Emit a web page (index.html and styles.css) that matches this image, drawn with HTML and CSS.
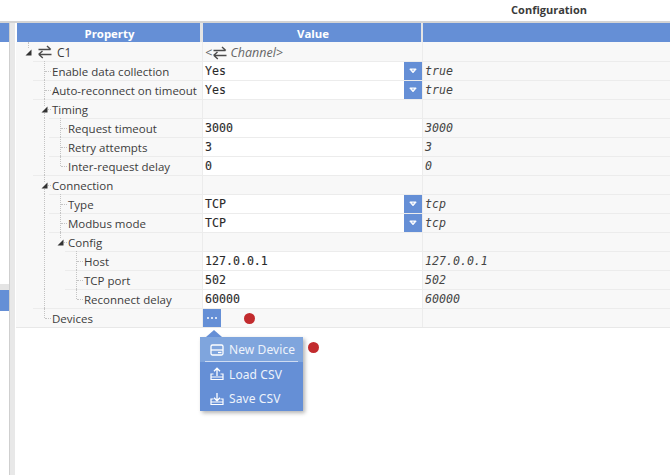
FILE: index.html
```html
<!DOCTYPE html>
<html lang="en">
<head>
<meta charset="utf-8">
<title>Configuration</title>
<link rel="stylesheet" href="styles.css">
</head>
<body>
<svg class="defs" width="0" height="0" aria-hidden="true">
  <symbol id="chan" viewBox="0 0 14 14">
    <path d="M0.5 4.5H12.5M9 1L12.8 4.5M0.5 9.5L4.5 6M1 9.5H13.5M1 9.5L4.8 13" fill="none" stroke="#4a4a4a" stroke-width="1.4"/>
  </symbol>
  <symbol id="caret" viewBox="0 0 8 6">
    <path d="M0.8 1H7.2L4 4.8Z" fill="#fff" stroke="#fff" stroke-width="1"/>
    <path d="M2.9 1.7H5.1L4 2.9Z" fill="#6a93d8"/>
  </symbol>
  <symbol id="tri" viewBox="0 0 7 7">
    <path d="M6.5 0.5V6.5H0.5Z" fill="#333"/>
  </symbol>
</svg>
<header class="topbar"><span class="title">Configuration</span></header>
<main class="main">
  <aside class="side">
    <div class="side-head"></div>
    <div class="side-body"></div>
    <div class="side-band"></div>
    <div class="side-sel"></div>
    <div class="side-rest"></div>
  </aside>
  <div class="splitter"></div>
  <section class="table">
    <div class="head">
      <div class="hcell hname">Property</div>
      <div class="hcell hvalue">Value</div>
      <div class="hcell hextra"></div>
    </div>

    <div class="row first">
      <div class="name l0"><i class="stub"></i><svg class="tri"><use href="#tri"/></svg><svg class="chan"><use href="#chan"/></svg><span class="label">C1</span></div>
      <div class="val group note">&lt;<svg class="chan inl"><use href="#chan"/></svg> Channel&gt;</div>
      <div class="extra"></div>
    </div>
    <div class="row">
      <div class="name l1"><i class="v v1"></i><i class="h h1"></i><span class="label">Enable data collection</span></div>
      <div class="val edit">Yes<span class="drop"><svg class="caret"><use href="#caret"/></svg></span></div>
      <div class="extra">true</div>
    </div>
    <div class="row">
      <div class="name l1"><i class="v v1"></i><i class="h h1"></i><span class="label">Auto-reconnect on timeout</span></div>
      <div class="val edit">Yes<span class="drop"><svg class="caret"><use href="#caret"/></svg></span></div>
      <div class="extra">true</div>
    </div>
    <div class="row">
      <div class="name l1"><i class="v v1"></i><i class="h h1"></i><svg class="tri t1"><use href="#tri"/></svg><span class="label">Timing</span></div>
      <div class="val group"></div>
      <div class="extra"></div>
    </div>
    <div class="row">
      <div class="name l2"><i class="v v1"></i><i class="v v2"></i><i class="h h2"></i><span class="label">Request timeout</span></div>
      <div class="val edit">3000</div>
      <div class="extra">3000</div>
    </div>
    <div class="row">
      <div class="name l2"><i class="v v1"></i><i class="v v2"></i><i class="h h2"></i><span class="label">Retry attempts</span></div>
      <div class="val edit">3</div>
      <div class="extra">3</div>
    </div>
    <div class="row">
      <div class="name l2"><i class="v v1"></i><i class="v v2 end"></i><i class="h h2"></i><span class="label">Inter-request delay</span></div>
      <div class="val edit">0</div>
      <div class="extra">0</div>
    </div>
    <div class="row">
      <div class="name l1"><i class="v v1"></i><i class="h h1"></i><svg class="tri t1"><use href="#tri"/></svg><span class="label">Connection</span></div>
      <div class="val group"></div>
      <div class="extra"></div>
    </div>
    <div class="row">
      <div class="name l2"><i class="v v1"></i><i class="v v2"></i><i class="h h2"></i><span class="label">Type</span></div>
      <div class="val edit">TCP<span class="drop"><svg class="caret"><use href="#caret"/></svg></span></div>
      <div class="extra">tcp</div>
    </div>
    <div class="row">
      <div class="name l2"><i class="v v1"></i><i class="v v2"></i><i class="h h2"></i><span class="label">Modbus mode</span></div>
      <div class="val edit">TCP<span class="drop"><svg class="caret"><use href="#caret"/></svg></span></div>
      <div class="extra">tcp</div>
    </div>
    <div class="row">
      <div class="name l2"><i class="v v1"></i><i class="v v2 end"></i><i class="h h2"></i><svg class="tri t2"><use href="#tri"/></svg><span class="label">Config</span></div>
      <div class="val group"></div>
      <div class="extra"></div>
    </div>
    <div class="row">
      <div class="name l3"><i class="v v1"></i><i class="v v3"></i><i class="h h3"></i><span class="label">Host</span></div>
      <div class="val edit">127.0.0.1</div>
      <div class="extra">127.0.0.1</div>
    </div>
    <div class="row">
      <div class="name l3"><i class="v v1"></i><i class="v v3"></i><i class="h h3"></i><span class="label">TCP port</span></div>
      <div class="val edit">502</div>
      <div class="extra">502</div>
    </div>
    <div class="row">
      <div class="name l3"><i class="v v1"></i><i class="v v3 end"></i><i class="h h3"></i><span class="label">Reconnect delay</span></div>
      <div class="val edit">60000</div>
      <div class="extra">60000</div>
    </div>
    <div class="row last">
      <div class="name l1"><i class="v v1 end"></i><i class="h h1"></i><span class="label">Devices</span></div>
      <div class="val group"><span class="more"><b></b><b></b><b></b></span></div>
      <div class="extra"></div>
    </div>

    <span class="dot dot-a"></span>
    <span class="dot dot-b"></span>

    <nav class="menu">
      <div class="item active">
        <svg class="micon" viewBox="0 0 14 14"><rect x="1" y="2" width="12" height="10" rx="1.5" fill="none" stroke="#fff" stroke-width="1.3"/><path d="M1 7H13" stroke="#fff" stroke-width="1.3"/><path d="M8 9.5H11.5" stroke="#fff" stroke-width="1.3"/></svg>
        <span>New Device</span>
      </div>
      <div class="item">
        <svg class="micon" viewBox="0 0 14 14"><path d="M7 9V1.5M4 4.3L7 1.2L10 4.3" fill="none" stroke="#fff" stroke-width="1.3"/><path d="M3.5 7H1V12.5H13V7H10.5M1 10H13" fill="none" stroke="#fff" stroke-width="1.2"/></svg>
        <span>Load CSV</span>
      </div>
      <div class="item">
        <svg class="micon" viewBox="0 0 14 14"><path d="M7 1V8.5M4 5.7L7 8.8L10 5.7" fill="none" stroke="#fff" stroke-width="1.3"/><path d="M3.5 7H1V12.5H13V7H10.5M1 10H13" fill="none" stroke="#fff" stroke-width="1.2"/></svg>
        <span>Save CSV</span>
      </div>
    </nav>
  </section>
</main>
</body>
</html>
```
FILE: styles.css
```css
* { box-sizing: border-box; }
html, body { margin: 0; height: 100%; overflow: hidden; }
body {
  width: 670px;
  height: 475px;
  display: flex;
  flex-direction: column;
  background: #fff;
  font-family: "Open Sans", "Noto Sans", sans-serif;
  font-size: 11.5px;
  color: #333;
}
.defs { position: absolute; }

.topbar {
  height: 21px;
  flex: none;
  display: flex;
  justify-content: flex-end;
  align-items: center;
  padding-right: 83px;
}
.title { font-weight: 700; font-size: 11px; color: #3a3a3a; position: relative; top: -1px; }

.main { flex: 1; display: flex; min-height: 0; border-top: 2px solid #d4d4d4; }

.side { width: 9px; flex: none; display: flex; flex-direction: column; }
.side-head { height: 19px; background: #658fd6; }
.side-body { flex: 0 0 242px; }
.side-band { height: 6px; background: #e4e4e4; }
.side-sel { height: 21px; background: #658fd6; }

.splitter { width: 6px; flex: none; background: #e8e8e8; border-left: 1px solid #cfcfcf; }

.table { position: relative; flex: 1; margin-left: 1px; min-width: 0; }

.head, .row { display: grid; grid-template-columns: 186px 220px 1fr; }
.head { height: 19px; background: #658fd6; color: #fff; font-weight: 700; }
.hcell {
  display: flex;
  align-items: center;
  justify-content: center;
  padding: 1px 0 0 2px;
  background: #658fd6;
  border-left: 1px solid #e4e4e4;
  font-size: 11.4px;
}
.hname { border-left: 1px solid #fff; border-right: 2px solid #e4e4e4; }
.hvalue { border-right: 1px solid #e4e4e4; }

.row { height: 19px; background: #f8f8f8; }
.last { height: 20px; border-bottom: 1px solid #e8e8e8; }

.name { position: relative; display: flex; align-items: center; }
.name::before {
  content: "";
  position: absolute;
  top: 0;
  right: 0;
  height: 1px;
  background: #ececec;
}
.first .name::before { display: none; }
.l0 { padding-left: 22px; }
.l1 { padding-left: 36px; }
.l2 { padding-left: 52px; }
.l3 { padding-left: 68px; }
.l1::before { left: 17px; }
.l2::before { left: 33px; }
.l3::before { left: 49px; }

.label { white-space: nowrap; color: #3c3c3c; position: relative; top: 0.5px; }
.l0 .label { font-size: 12px; }

.v, .h, .stub { position: absolute; display: block; }
.v { top: 0; bottom: 0; width: 0; border-left: 1px dotted #c4c4c4; }
.v.end { bottom: 9px; }
.v1 { left: 28px; }
.v2 { left: 44px; }
.v3 { left: 60px; }
.h { top: 10px; height: 0; border-top: 1px dotted #c4c4c4; width: 6px; }
.h1 { left: 29px; }
.h2 { left: 45px; }
.h3 { left: 61px; }
.stub { left: 12px; top: 0; height: 6px; border-left: 1px dotted #c4c4c4; }

.tri { position: absolute; width: 7px; height: 7px; top: 7px; left: 9px; }
.t1 { left: 25px; background: #f8f8f8; }
.t2 { left: 41px; background: #f8f8f8; }
.chan { width: 14px; height: 14px; flex: none; margin-right: 5px; }
.chan.inl { margin: 0 0 0 1px; vertical-align: -3px; }

.val, .extra {
  position: relative;
  border-top: 1px solid #ececec;
  border-left: 1px solid #ececec;
  font-family: "DejaVu Sans Mono", monospace;
  font-size: 11.6px;
  line-height: 19px;
  white-space: nowrap;
  overflow: hidden;
}
.first .val, .first .extra { border-top: 0; }
.val { padding-left: 2px; color: #2a2a2a; -webkit-text-stroke: 0.12px #2a2a2a; }
.edit { background: #fff; }
.extra { padding-left: 2px; font-style: italic; color: #444; }
.note {
  font-family: "Open Sans", sans-serif;
  font-size: 12.5px;
  font-style: italic;
  color: #666;
  line-height: 22px;
  -webkit-text-stroke: 0;
}
.drop {
  position: absolute;
  right: 0;
  top: 0;
  width: 18px;
  height: 18px;
  background: #658fd6;
  display: flex;
  align-items: center;
  justify-content: center;
}
.caret { width: 8px; height: 6px; }
.more {
  display: flex;
  width: 18px;
  height: 18px;
  margin-left: -2px;
  gap: 1.5px;
  align-items: center;
  justify-content: center;
  background: #658fd6;
}
.more b { width: 2.5px; height: 2.5px; border-radius: 50%; background: #fff; }

.dot { position: absolute; width: 11px; height: 11px; border-radius: 50%; background: #c22b2e; }
.dot-a { left: 228px; top: 290px; }
.dot-b { left: 292px; top: 319px; }

.menu {
  position: absolute;
  left: 184px;
  top: 314px;
  width: 103px;
  background: #658fd6;
  box-shadow: 2px 2px 4px rgba(0, 0, 0, 0.3);
  color: #eef3fb;
  font-family: "Noto Sans", sans-serif;
  font-size: 12px;
}
.menu::before {
  content: "";
  position: absolute;
  left: 6px;
  top: -7px;
  border: 8px solid transparent;
  border-top: 0;
  border-bottom: 7px solid #658fd6;
}
.item {
  height: 24.5px;
  display: flex;
  align-items: center;
  gap: 5px;
  padding: 1px 0 0 10px;
  letter-spacing: 0.1px;
}
.active { background: #7fa5dd; position: relative; color: #eef3fb; }
.active::after {
  content: "";
  position: absolute;
  left: 5px;
  right: 5px;
  bottom: 0;
  height: 1px;
  background: #cfdcf2;
}
.micon { width: 14px; height: 14px; flex: none; }
```
